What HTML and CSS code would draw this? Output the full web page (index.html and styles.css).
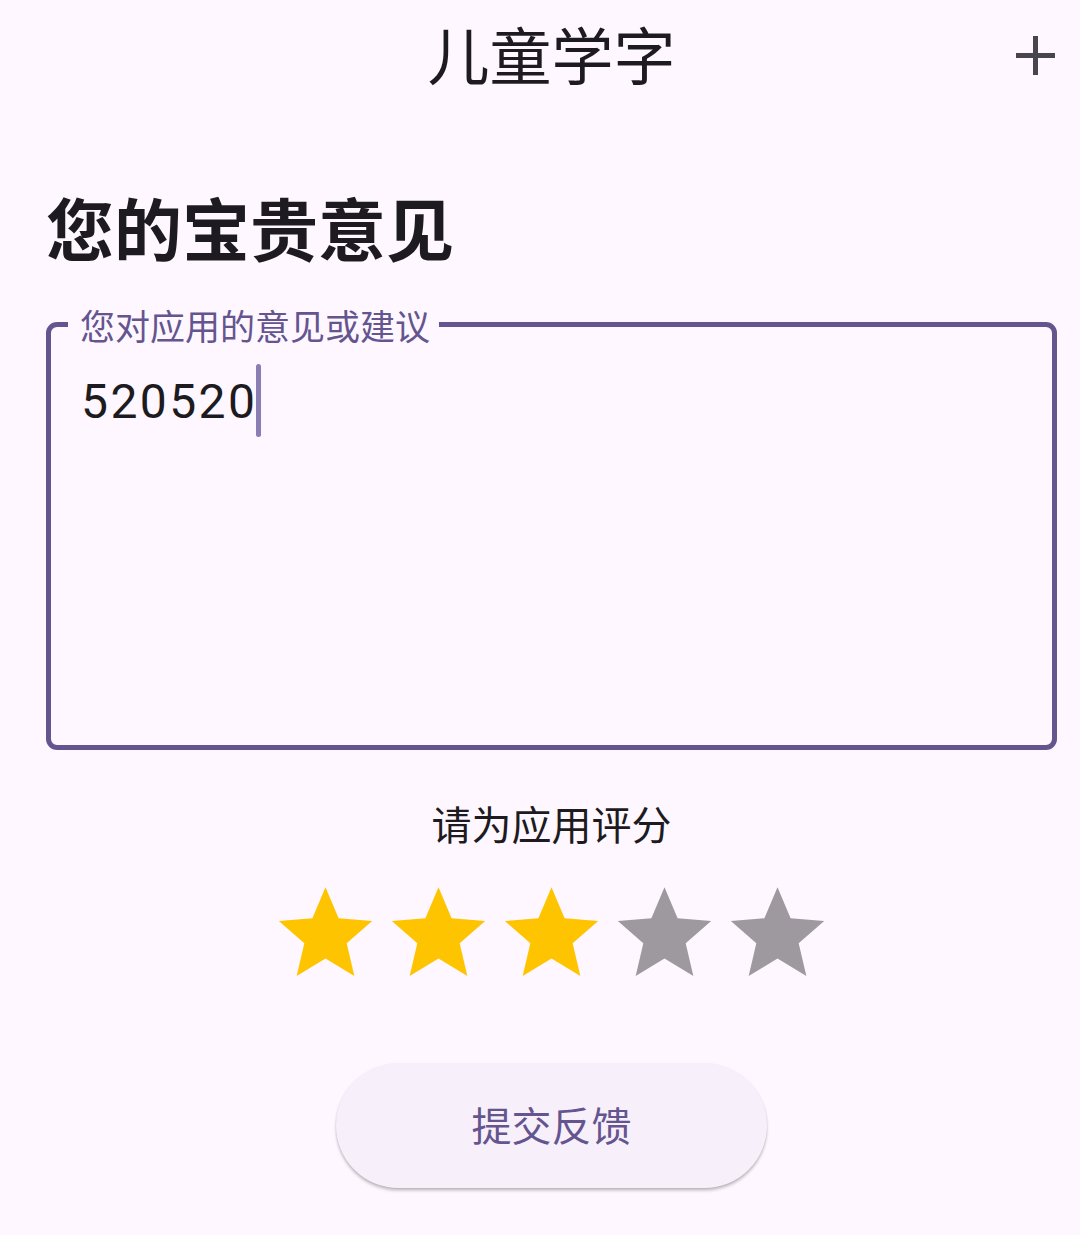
FILE: index.html
```html
<!DOCTYPE html>
<html lang="zh-CN">
<head>
<meta charset="utf-8">
<title>儿童学字</title>
<link rel="stylesheet" href="styles.css">
</head>
<body>
<div class="page">
  <header class="appbar">
    <span></span>
    <h1 class="appbar-title">儿童学字</h1>
    <button class="icon-btn" aria-label="添加">
      <svg width="39" height="39" viewBox="0 0 39 39"><path d="M19.5 0v39M0 19.5h39" stroke="#49454F" stroke-width="5" fill="none"/></svg>
    </button>
  </header>

  <h2 class="heading">您的宝贵意见</h2>

  <div class="field">
    <span class="field-label">您对应用的意见或建议</span>
    <div class="field-input"><span class="field-text">520520</span><span class="cursor"></span></div>
  </div>

  <p class="rate-label">请为应用评分</p>

  <div class="stars">
    <svg class="star on" viewBox="0 0 24 24"><path d="M12 17.27L18.18 21l-1.64-7.03L22 9.24l-7.19-.61L12 2 9.19 8.63 2 9.24l5.46 4.73L5.82 21z"/></svg>
    <svg class="star on" viewBox="0 0 24 24"><path d="M12 17.27L18.18 21l-1.64-7.03L22 9.24l-7.19-.61L12 2 9.19 8.63 2 9.24l5.46 4.73L5.82 21z"/></svg>
    <svg class="star on" viewBox="0 0 24 24"><path d="M12 17.27L18.18 21l-1.64-7.03L22 9.24l-7.19-.61L12 2 9.19 8.63 2 9.24l5.46 4.73L5.82 21z"/></svg>
    <svg class="star off" viewBox="0 0 24 24"><path d="M12 17.27L18.18 21l-1.64-7.03L22 9.24l-7.19-.61L12 2 9.19 8.63 2 9.24l5.46 4.73L5.82 21z"/></svg>
    <svg class="star off" viewBox="0 0 24 24"><path d="M12 17.27L18.18 21l-1.64-7.03L22 9.24l-7.19-.61L12 2 9.19 8.63 2 9.24l5.46 4.73L5.82 21z"/></svg>
  </div>

  <div class="actions">
    <button class="submit">提交反馈</button>
  </div>
</div>
</body>
</html>
```

FILE: styles.css
```css
* { box-sizing: border-box; }
html, body {
  margin: 0;
  padding: 0;
  background: #FEF7FF;
}
body {
  width: 1080px;
  height: 1235px;
  overflow: hidden;
  font-family: "Noto Sans CJK SC", "Noto Sans", sans-serif;
  color: #1D1B20;
}
.page {
  margin: 0 23px 0 46px;
  display: flex;
  flex-direction: column;
}
.appbar {
  height: 106px;
  display: grid;
  grid-template-columns: 1fr auto 1fr;
  align-items: center;
}
.appbar-title {
  margin: 0;
  font-size: 62px;
  line-height: 1;
  font-weight: 400;
  color: #1D1B20;
}
.icon-btn {
  justify-self: end;
  margin-right: 2px;
  margin-top: 4px;
  padding: 0;
  border: 0;
  background: none;
  width: 39px;
  height: 39px;
  display: block;
}
.icon-btn svg { display: block; }
.heading {
  margin: 87px 0 0 0;
  font-size: 68px;
  line-height: 1;
  font-weight: 700;
  color: #1D1B20;
}
.field {
  position: relative;
  margin-top: 61px;
  height: 428px;
  border: 5px solid #65558F;
  border-radius: 11px;
  padding: 37px 28px 0 30px;
}
.field-label {
  position: absolute;
  top: -20px;
  left: 17px;
  padding: 0 9px 0 12px;
  background: #FEF7FF;
  font-size: 35px;
  line-height: 1;
  color: #65558F;
}
.field-input {
  display: flex;
  align-items: center;
  height: 73px;
}
.field-text {
  font-family: Roboto, "Noto Sans", sans-serif;
  font-size: 48px;
  line-height: 1;
  letter-spacing: 2.4px;
  color: #1D1B20;
  margin-top: 2px;
}
.cursor {
  width: 5px;
  height: 73px;
  margin-left: -1px;
  border-radius: 3px;
  background: #8A7DB3;
}
.rate-label {
  margin: 53px 0 0;
  text-align: center;
  font-size: 40px;
  line-height: 1;
  color: #1D1B20;
}
.stars {
  margin-top: 35px;
  display: flex;
  justify-content: center;
}
.star {
  width: 113px;
  height: 112px;
  display: block;
}
.star.on { fill: #FFC400; }
.star.off { fill: #9E999F; }
.actions {
  margin-top: 73px;
  display: flex;
  justify-content: center;
}
.submit {
  width: 431px;
  height: 125px;
  border: 0;
  border-radius: 63px;
  background: #F7F0FB;
  box-shadow: 0 3px 3px rgba(0,0,0,0.18), 0 1px 2px rgba(0,0,0,0.12);
  font-family: "Noto Sans CJK SC", "Noto Sans", sans-serif;
  font-size: 40px;
  line-height: 1;
  color: #65558F;
  padding: 0 0 4px;
}
```
